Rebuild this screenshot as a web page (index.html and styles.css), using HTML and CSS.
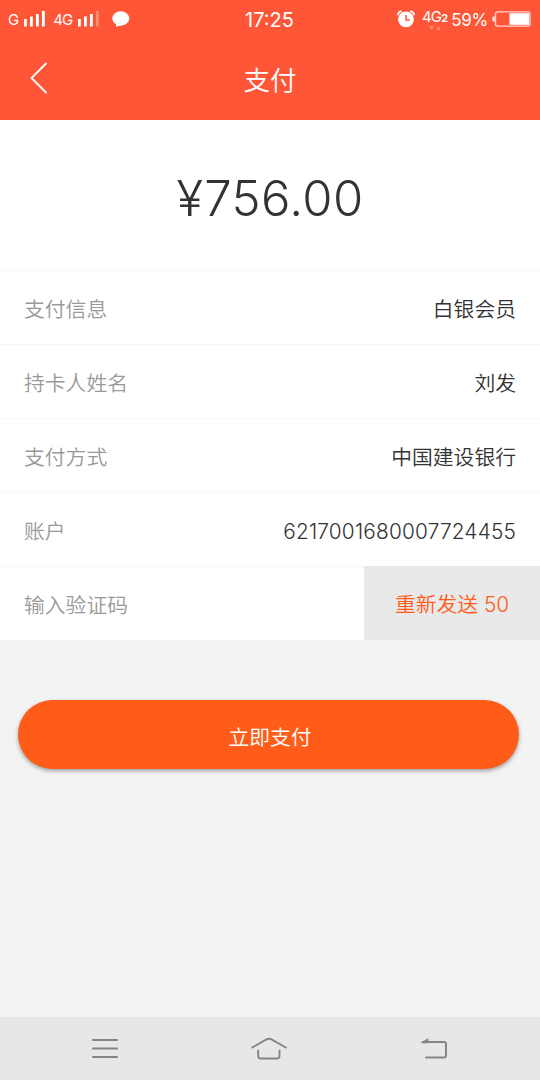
FILE: index.html
```html
<!DOCTYPE html>
<html lang="zh-CN">
<head>
<meta charset="utf-8">
<title>支付</title>
<link rel="stylesheet" href="styles.css">
</head>
<body>

<header>
  <div class="status-bar">
    <div class="status-left">
      <span class="net">G</span>
      <svg class="signal" width="22" height="16" viewBox="0 0 22 16" fill="#fff">
        <rect x="0" y="8" width="2.8" height="7.5"/>
        <rect x="6" y="5.5" width="2.8" height="10"/>
        <rect x="12" y="3" width="2.8" height="12.5"/>
        <rect x="18" y="0" width="2.8" height="15.5"/>
      </svg>
      <span class="net">4G</span>
      <svg class="signal" width="22" height="16" viewBox="0 0 22 16" fill="#fff">
        <rect x="0" y="8" width="2.8" height="7.5"/>
        <rect x="6" y="5.5" width="2.8" height="10"/>
        <rect x="12" y="3" width="2.8" height="12.5"/>
        <rect x="18" y="0" width="2.8" height="15.5" opacity=".3"/>
      </svg>
      <svg class="chat" width="18" height="17" viewBox="0 0 18 17" fill="#fff">
        <ellipse cx="8.8" cy="7.5" rx="8.5" ry="7.2"/>
        <path d="M4 12 L4 16 L9 14 Z"/>
      </svg>
    </div>
    <span class="clock">17:25</span>
    <div class="status-right">
      <svg class="alarm" width="18" height="18" viewBox="0 0 18 18">
        <circle cx="9" cy="9.3" r="7.9" fill="#fff"/>
        <path d="M1 5.2 A4 4 0 0 1 4.8 1.4 M13.2 1.4 A4 4 0 0 1 17 5.2" fill="none" stroke="#fff" stroke-width="1.8"/>
        <path d="M9 5 V10 H12.8" fill="none" stroke="#ff5637" stroke-width="1.5"/>
      </svg>
      <div class="data">
        <span class="data-type">4G<b>2</b></span>
        <svg class="arrows" width="12" height="5" viewBox="0 0 12 5" fill="#fff" opacity=".3">
          <path d="M0 0 H5 L2.5 4 Z M7 4 H12 L9.5 0 Z"/>
        </svg>
      </div>
      <span class="percent">59%</span>
      <svg class="battery" width="39" height="16" viewBox="0 0 39 16">
        <path d="M2.5 5.5 Q.8 5.5 .8 8 Q.8 10.5 2.5 10.5" fill="#fff" stroke="#fff" stroke-width="1"/>
        <rect x="3.5" y=".9" width="34.5" height="14.2" rx="2" fill="none" stroke="#fff" stroke-opacity=".75" stroke-width="1.3"/>
        <rect x="17.5" y="2.2" width="19.5" height="11.6" fill="#fff"/>
      </svg>
    </div>
  </div>
  <div class="title-bar">
    <svg class="back" width="18" height="32" viewBox="0 0 18 32">
      <path d="M16 1.5 L1.5 16 L16 30.5" fill="none" stroke="#fff" stroke-width="1.8" stroke-linecap="round"/>
    </svg>
    <h1>支付</h1>
  </div>
</header>

<main>
  <div class="amount"><span class="yen">¥</span>756.00</div>

  <div class="row">
    <span class="label">支付信息</span>
    <span class="value">白银会员</span>
  </div>
  <div class="row">
    <span class="label">持卡人姓名</span>
    <span class="value">刘发</span>
  </div>
  <div class="row">
    <span class="label">支付方式</span>
    <span class="value">中国建设银行</span>
  </div>
  <div class="row">
    <span class="label">账户</span>
    <span class="value number">6217001680007724455</span>
  </div>
  <div class="row code-row">
    <input class="code" type="text" placeholder="输入验证码">
    <button class="resend">重新发送 <span class="count">50</span></button>
  </div>

  <button class="pay">立即支付</button>
</main>

<nav>
  <svg width="26" height="22" viewBox="0 0 26 22" fill="none" stroke="#858585" stroke-width="2" stroke-linecap="round">
    <path d="M1 2 H25 M1 10.5 H25 M1 19 H25"/>
  </svg>
  <svg width="36" height="23" viewBox="0 0 36 23" fill="none" stroke="#858585" stroke-width="1.9" stroke-linecap="round" stroke-linejoin="round">
    <path d="M1.2 10.5 L16 2.2 Q18 1.2 20 2.2 L34.8 10.5"/>
    <path d="M7.2 13.5 V19 Q7.2 21.500 9.700 21.500 H26 Q28.500 21.500 28.500 19 V13.500"/>
  </svg>
  <svg width="28" height="22" viewBox="0 0 28 22" fill="none" stroke="#858585" stroke-width="2" stroke-linecap="round">
    <path d="M3 4 H24 Q26 4 26 6 V17 Q26 19.5 24 19.5 H6"/>
    <path d="M1.5 4.5 L8 .8 V4.5 Z" fill="#858585" stroke-width=".8"/>
  </svg>
</nav>

</body>
</html>
```
FILE: styles.css
```css
* {
  box-sizing: border-box;
}

body {
  margin: 0;
  height: 1080px;
  display: flex;
  flex-direction: column;
  background-color: #f3f3f3;
  font-family: Inter, "Noto Sans CJK SC", sans-serif;
  font-weight: 350;
  color: #333;
  overflow: hidden;
}

header {
  height: 120px;
  background-color: #ff5637;
  color: white;
}

.status-bar {
  height: 36px;
  display: grid;
  grid-template-columns: 1fr auto 1fr;
  align-items: center;
  padding: 0 9px 0 8px;
  font-weight: 400;
}

.status-left, .status-right {
  display: flex;
  align-items: center;
}

.net {
  font-size: 15px;
  letter-spacing: -0.9px;
}

.signal {
  margin: 0 7px 0 6px;
}

.chat {
  margin-left: 5px;
}

.clock {
  font-size: 20px;
  line-height: 36px;
  padding-top: 2px;
}

.status-right {
  justify-content: flex-end;
}

.alarm {
  margin-right: 7px;
}

.data {
  display: flex;
  flex-direction: column;
  align-items: center;
  margin-right: 4px;
  height: 21px;
}

.data-type {
  font-size: 15px;
  line-height: 16px;
  letter-spacing: -0.8px;
}

.data-type b {
  font-size: 11px;
}

.arrows {
  flex-shrink: 0;
}

.percent {
  font-size: 17px;
  line-height: 20px;
  letter-spacing: -0.3px;
  padding-top: 1px;
  margin-right: 4px;
}

.title-bar {
  height: 84px;
  display: grid;
  grid-template-columns: 60px 1fr 60px;
  align-items: center;
}

.back {
  margin-left: 30px;
}

h1 {
  margin: 0;
  font-size: 26.5px;
  font-weight: 350;
  text-align: center;
}

main {
  flex: 1;
}

.amount {
  height: 150px;
  background-color: white;
  font-size: 49px;
  font-weight: 300;
  line-height: 157px;
  letter-spacing: 0.4px;
  text-align: center;
}

.yen {
  margin-right: 1px;
}

.row {
  height: 74px;
  display: flex;
  align-items: center;
  justify-content: space-between;
  padding: 0 24px;
  background-color: white;
  border-top: 1px solid #f7f7f7;
  font-size: 20.8px;
}

.label {
  color: #999;
}

.number {
  padding-top: 3px;
  letter-spacing: 0.2px;
}

.code-row {
  padding: 0 0 0 24px;
}

.code {
  width: 300px;
  padding: 3px 0 0;
  border: none;
  outline: none;
  font: inherit;
}

.code::placeholder {
  color: #999;
}

.resend {
  width: 176px;
  height: 74px;
  margin-top: -1px;
  border: none;
  background-color: #e9e9e9;
  color: #ff5c1a;
  font: inherit;
}

.pay {
  display: block;
  width: 501px;
  height: 69px;
  margin: 60px auto 0 18px;
  padding: 2px 0 0 3px;
  border: none;
  border-radius: 35px;
  background-color: #ff5c1a;
  box-shadow: 0 2px 4px rgba(0, 0, 0, 0.35);
  color: white;
  font: inherit;
  font-size: 20.8px;
}

nav {
  height: 63px;
  display: flex;
  align-items: center;
  justify-content: space-between;
  padding: 0 92px;
  background-color: #e7e7e7;
}
```
